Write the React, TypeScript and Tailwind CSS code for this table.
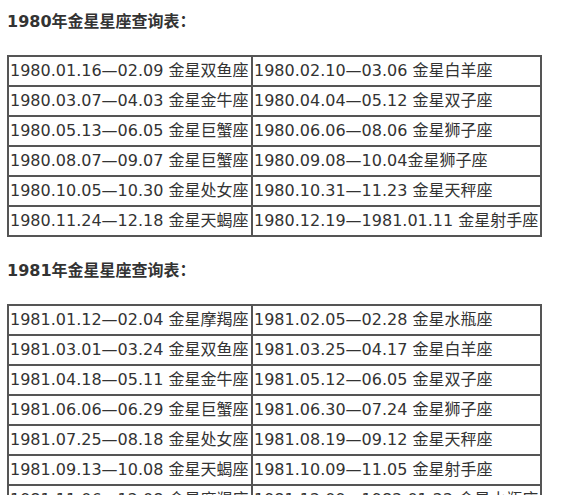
const tables: { year: string; rows: [string, string][] }[] = [
  {
    year: "1980",
    rows: [
      ["1980.01.16—02.09 金星双鱼座", "1980.02.10—03.06 金星白羊座"],
      ["1980.03.07—04.03 金星金牛座", "1980.04.04—05.12 金星双子座"],
      ["1980.05.13—06.05 金星巨蟹座", "1980.06.06—08.06 金星狮子座"],
      ["1980.08.07—09.07 金星巨蟹座", "1980.09.08—10.04金星狮子座"],
      ["1980.10.05—10.30 金星处女座", "1980.10.31—11.23 金星天秤座"],
      ["1980.11.24—12.18 金星天蝎座", "1980.12.19—1981.01.11 金星射手座"],
    ],
  },
  {
    year: "1981",
    rows: [
      ["1981.01.12—02.04 金星摩羯座", "1981.02.05—02.28 金星水瓶座"],
      ["1981.03.01—03.24 金星双鱼座", "1981.03.25—04.17 金星白羊座"],
      ["1981.04.18—05.11 金星金牛座", "1981.05.12—06.05 金星双子座"],
      ["1981.06.06—06.29 金星巨蟹座", "1981.06.30—07.24 金星狮子座"],
      ["1981.07.25—08.18 金星处女座", "1981.08.19—09.12 金星天秤座"],
      ["1981.09.13—10.08 金星天蝎座", "1981.10.09—11.05 金星射手座"],
      ["1981.11.06—12.08 金星摩羯座", "1981.12.09—1982.01.22 金星水瓶座"],
    ],
  },
];

export default function App() {
  return (
    <div
      className="h-[495px] overflow-hidden bg-white pl-[7px] pt-[10px] text-[16px] text-[#333]"
      style={{ fontFamily: '"DejaVu Sans", "Noto Sans CJK SC", sans-serif' }}
    >
      {tables.map((t, i) => (
        <div key={t.year} className={i > 0 ? "mt-[22px]" : ""}>
          <h2 className="font-bold leading-[24px]">{t.year}年金星星座查询表：</h2>
          <table className="mt-[21px] w-[535px] table-fixed border-collapse border-2 border-[#555]">
            <colgroup>
              <col className="w-[244px]" />
              <col />
            </colgroup>
            <tbody>
              {t.rows.map((r, j) => (
                <tr key={j}>
                  {r.map((c, k) => (
                    <td
                      key={k}
                      className="whitespace-nowrap border-2 border-[#555] px-[1px] py-0 leading-[28px]"
                    >
                      {c}
                    </td>
                  ))}
                </tr>
              ))}
            </tbody>
          </table>
        </div>
      ))}
    </div>
  );
}
